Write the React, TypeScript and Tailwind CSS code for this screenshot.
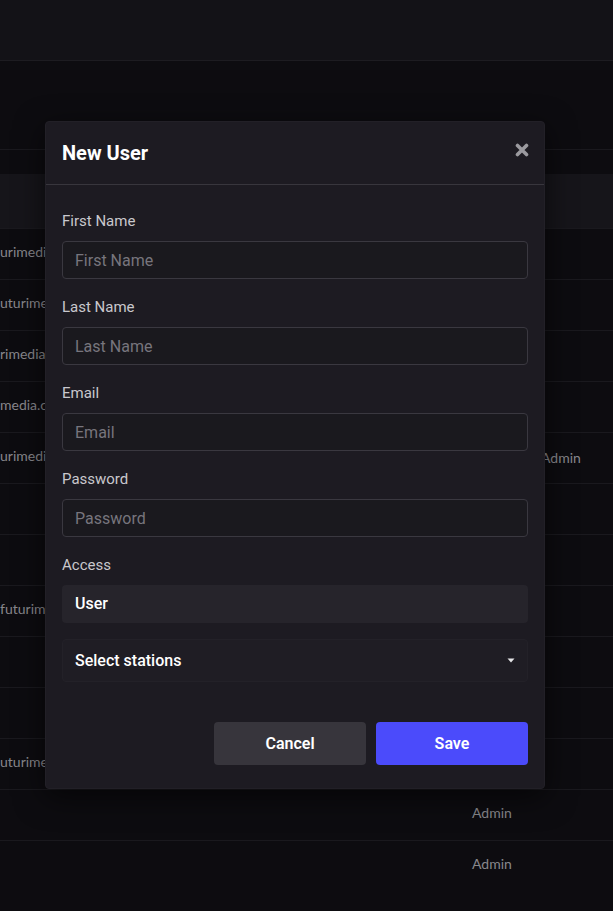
import React from "react";

type Row = { email?: string; role?: string; roleAt?: "near" | "far" };

const ROWS: Row[] = [
  { email: "urimedia.com" },
  { email: "uturimedia.com" },
  { email: "rimedia.com" },
  { email: "media.com" },
  { email: "urimedia.com", role: "Admin", roleAt: "far" },
  {},
  {},
  { email: "futurimedia.com" },
  {},
  {},
  { email: "uturimedia.com" },
  { role: "Admin", roleAt: "near" },
  { role: "Admin", roleAt: "near" },
];

const FIELDS = ["First Name", "Last Name", "Email", "Password"];

function CloseIcon() {
  return (
    <svg width="14" height="14" viewBox="0 0 14 14" aria-hidden>
      <path d="M2.5 2.5 L11.5 11.5 M11.5 2.5 L2.5 11.5" stroke="#9b9a9f" strokeWidth="3.6" strokeLinecap="round" />
    </svg>
  );
}

function Caret() {
  return (
    <svg width="8" height="5" viewBox="0 0 8 5" aria-hidden>
      <polygon points="0.5,0.5 7.5,0.5 4,4.5" fill="#e5e5e7" />
    </svg>
  );
}

function Backdrop() {
  return (
    <div className="text-[14px] text-[#88878c]" style={{ fontFamily: "Lato, 'Open Sans', sans-serif" }}>
      <div className="h-[61px] bg-[#131217] border-b border-[#1d1c21]" />
      <div className="h-[89px] border-b border-[#1a191e]" />
      <div className="h-[24px]" />
      <div className="h-[54px] bg-[#16151a]" />
      {ROWS.map((r, i) => (
        <div key={i} className="h-[51px] border-t border-[#1a191e] flex items-center pb-[5px] relative">
          {r.email && (
            <span className="w-[45px] overflow-hidden whitespace-nowrap">{r.email}</span>
          )}
          {r.role && (
            <span className={r.roleAt === "far" ? "absolute left-[541px] top-[14px]" : "absolute left-[472px] top-[12px]"}>
              {r.role}
            </span>
          )}
        </div>
      ))}
    </div>
  );
}

function Field({ label }: { label: string }) {
  return (
    <div className="mb-[18px]">
      <div className="h-[20px] leading-[20px] text-[15px] text-[#c9c8cd]">{label}</div>
      <input
        placeholder={label}
        className="mt-[10px] w-full h-[38px] rounded-[4px] border border-[#3a3840] bg-[#1a191e] px-[12px] text-[16px] text-white placeholder:text-[#77757d] outline-none"
      />
    </div>
  );
}

export default function App() {
  return (
    <div className="relative w-[613px] h-[911px] overflow-hidden bg-[#0d0c10]">
      <Backdrop />
      <div
        className="absolute left-[45px] top-[121px] w-[500px] h-[668px] rounded-[4px] bg-[#1d1b22] border border-[#222027] shadow-[0_8px_30px_rgba(0,0,0,0.6)]"
        style={{ fontFamily: "Roboto, 'Liberation Sans', sans-serif" }}
      >
        <div className="h-[63px] flex items-center justify-between px-[16px] border-b border-[#38363d]">
          <h2 className="text-[20px] font-bold text-white">New User</h2>
          <div className="mr-[-1px] mb-[6px]">
            <CloseIcon />
          </div>
        </div>
        <div className="px-[16px] pt-[26px]">
          {FIELDS.map((f) => (
            <Field key={f} label={f} />
          ))}
          <div className="h-[20px] leading-[20px] text-[15px] text-[#c9c8cd]">Access</div>
          <div className="mt-[10px] h-[38px] rounded-[4px] bg-[#26242b] flex items-center px-[13px] text-[16px] font-medium text-white">
            User
          </div>
          <div className="mt-[16px] h-[43px] rounded-[4px] bg-[#1f1d24] border border-[#232128] flex items-center justify-between pl-[12px] pr-[12px] text-[16px] font-medium text-white">
            <span>Select stations</span>
            <Caret />
          </div>
          <div className="mt-[40px] flex justify-end gap-[10px]">
            <button className="w-[152px] h-[43px] rounded-[4px] bg-[#37353c] text-white text-[16px] font-semibold">
              Cancel
            </button>
            <button className="w-[152px] h-[43px] rounded-[4px] bg-[#4b4bfb] text-white text-[16px] font-semibold">
              Save
            </button>
          </div>
        </div>
      </div>
    </div>
  );
}
